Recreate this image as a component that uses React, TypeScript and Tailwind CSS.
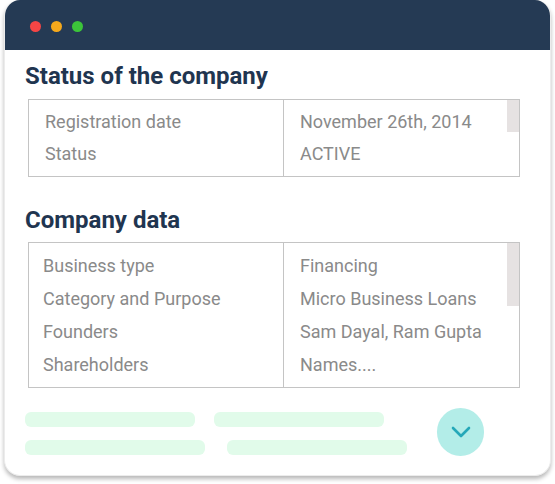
const statusRows = [
  ["Registration date", "November 26th, 2014"],
  ["Status", "ACTIVE"],
];

const dataRows = [
  ["Business type", "Financing"],
  ["Category and Purpose", "Micro Business Loans"],
  ["Founders", "Sam Dayal, Ram Gupta"],
  ["Shareholders", "Names...."],
];

const InfoTable = ({
  rows,
  rowH,
  leftPad,
  topPad,
  thumbH,
}: {
  rows: string[][];
  rowH: string;
  leftPad: string;
  topPad: string;
  thumbH: string;
}) => (
  <div className="relative ml-[23px] w-[492px] border border-[#c4c4c4] flex">
    <div className={`w-[255px] border-r border-[#c4c4c4] ${topPad} ${leftPad}`}>
      {rows.map((r) => (
        <div key={r[0]} className={`${rowH} flex items-center`}>
          {r[0]}
        </div>
      ))}
    </div>
    <div className={`flex-1 pl-[16px] ${topPad}`}>
      {rows.map((r) => (
        <div key={r[1]} className={`${rowH} flex items-center`}>
          {r[1]}
        </div>
      ))}
    </div>
    <div className={`absolute right-0 top-0 w-[12px] bg-[#e6e2e2] ${thumbH}`} />
  </div>
);

export default function App() {
  return (
    <div className="w-[555px] h-[484px] bg-white pl-[4px] font-['Roboto',sans-serif]">
      <div className="w-[547px] h-[476px] rounded-[16px] bg-white shadow-[0_3px_4px_rgba(0,0,0,0.28)] overflow-hidden border border-[#ececec] border-t-0">
        <div className="h-[50px] bg-[#253a54] flex items-center gap-[10px] pl-[25px] pt-[2px]">
          <span className="w-[11px] h-[11px] rounded-full bg-[#f44545]" />
          <span className="w-[11px] h-[11px] rounded-full bg-[#f5a81c]" />
          <span className="w-[11px] h-[11px] rounded-full bg-[#3cc43a]" />
        </div>

        <div className="text-[18px] text-[#8a8a8a]">
          <h2 className="ml-[20px] mt-[12px] mb-[9px] text-[24px] leading-[28px] font-bold text-[#1f3550]">
            Status of the company
          </h2>
          <InfoTable rows={statusRows} rowH="h-[32px]" leftPad="pl-[16px]" topPad="pt-[5px] pb-[7px]" thumbH="h-[32px]" />

          <h2 className="ml-[20px] mt-[29px] mb-[8px] text-[24px] leading-[28px] font-bold text-[#1f3550]">
            Company data
          </h2>
          <InfoTable rows={dataRows} rowH="h-[33px]" leftPad="pl-[14px]" topPad="pt-[6px] pb-[6px]" thumbH="h-[63px]" />

          <div className="flex items-center mt-[20px] pl-[20px]">
            <div className="flex flex-col gap-[13px] pt-[2px] w-[412px]">
              <div className="flex gap-[19px]">
                <div className="w-[170px] h-[15px] rounded-[6px] bg-[#e1fbea]" />
                <div className="w-[170px] h-[15px] rounded-[6px] bg-[#e1fbea]" />
              </div>
              <div className="flex gap-[22px]">
                <div className="w-[180px] h-[15px] rounded-[6px] bg-[#e1fbea]" />
                <div className="w-[180px] h-[15px] rounded-[6px] bg-[#e1fbea]" />
              </div>
            </div>
            <div className="w-[47px] h-[48px] rounded-full bg-[#b3ede8] flex items-center justify-center">
              <svg width="20" height="12" viewBox="0 0 20 12" fill="none">
                <path d="M2 2l8 8 8-8" stroke="#25a8b8" strokeWidth="2.6" strokeLinecap="round" strokeLinejoin="round" />
              </svg>
            </div>
          </div>
        </div>
      </div>
    </div>
  );
}
